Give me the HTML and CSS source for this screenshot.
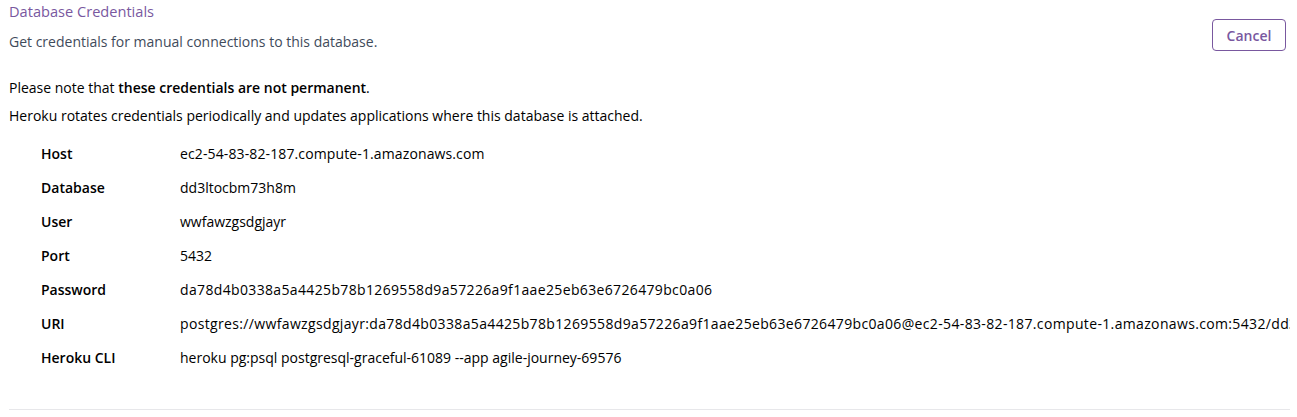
FILE: index.html
```html
<!DOCTYPE html>
<html>
<head>
<meta charset="utf-8">
<link rel="stylesheet" href="styles.css">
</head>
<body>
<div class="panel">
  <div class="header">
    <div class="header-text">
      <div class="title">Database Credentials</div>
      <div class="subtitle">Get credentials for manual connections to this database.</div>
    </div>
    <button class="cancel">Cancel</button>
  </div>
  <p class="note">Please note that <b>these credentials are not permanent</b>.</p>
  <p class="note2">Heroku rotates credentials periodically and updates applications where this database is attached.</p>
  <dl class="creds">
    <div class="row"><dt>Host</dt><dd class="host">ec2-54-83-82-187.compute-1.amazonaws.com</dd></div>
    <div class="row"><dt>Database</dt><dd>dd3ltocbm73h8m</dd></div>
    <div class="row"><dt>User</dt><dd>wwfawzgsdgjayr</dd></div>
    <div class="row"><dt>Port</dt><dd>5432</dd></div>
    <div class="row"><dt>Password</dt><dd class="hex">da78d4b0338a5a4425b78b1269558d9a57226a9f1aae25eb63e6726479bc0a06</dd></div>
    <div class="row"><dt>URI</dt><dd class="hex">postgres://wwfawzgsdgjayr:da78d4b0338a5a4425b78b1269558d9a57226a9f1aae25eb63e6726479bc0a06@ec2-54-83-82-187.compute-1.amazonaws.com:5432/dd3ltocbm73h8m</dd></div>
    <div class="row"><dt>Heroku CLI</dt><dd>heroku pg:psql postgresql-graceful-61089 --app agile-journey-69576</dd></div>
  </dl>
</div>
</body>
</html>
```
FILE: styles.css
```css
body {
  margin: 0;
  background: #fff;
  font-family: "Open Sans", "Noto Sans", sans-serif;
  font-size: 14px;
  color: #000;
}
.panel {
  margin: 0 7px 0 9px;
  overflow: hidden;
  border-bottom: 1px solid #e7e7ea;
  padding-bottom: 35px;
}
.header {
  display: flex;
  justify-content: space-between;
  align-items: flex-start;
}
.title {
  color: #79589f;
  font-size: 14.6px;
  line-height: 20px;
  margin-top: 1px;
}
.subtitle {
  color: #3f4b5b;
  font-size: 14px;
  line-height: 20px;
  margin-top: 11px;
}
.cancel {
  margin-top: 19px;
  margin-right: 4px;
  width: 74px;
  height: 32px;
  border: 1px solid #79589f;
  border-radius: 4px;
  background: #fff;
  color: #79589f;
  font-family: inherit;
  font-size: 14px;
  font-weight: 600;
  cursor: pointer;
}
.note {
  margin: 26px 0 0;
  line-height: 20px;
}
.note b {
  font-weight: 600;
}
.note2 {
  margin: 8px 0 0;
  line-height: 20px;
}
.creds {
  margin: 10px 0 0;
  padding-left: 32px;
}
.row {
  display: flex;
  height: 34px;
  align-items: center;
}
dt {
  width: 139px;
  flex: none;
  font-weight: 600;
}
dd {
  margin: 0;
  white-space: nowrap;
}
.host {
  letter-spacing: 0.12px;
}
.hex {
  letter-spacing: 0.35px;
}
```
